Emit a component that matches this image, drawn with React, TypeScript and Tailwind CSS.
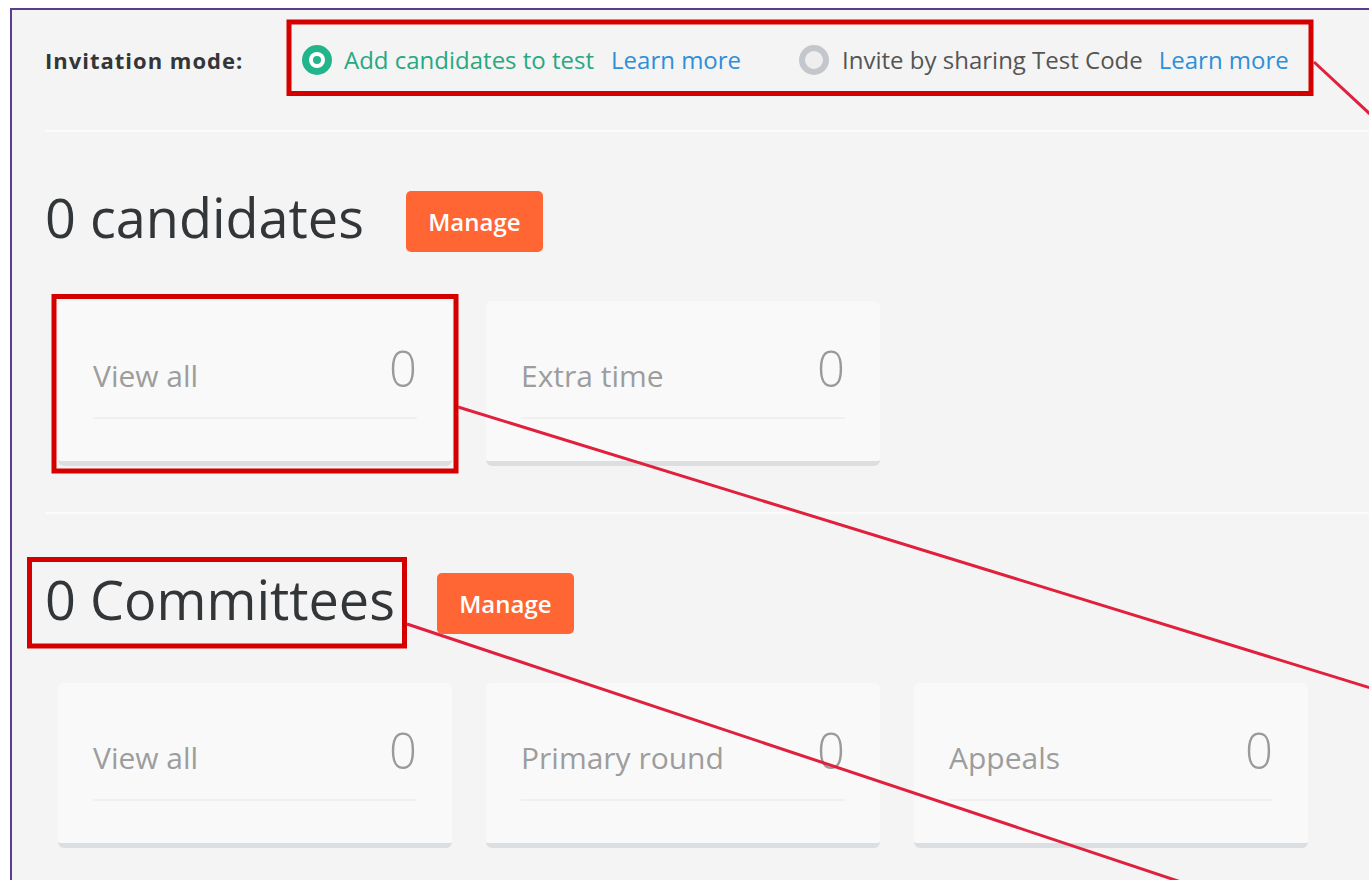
import React from 'react';

interface StatCardProps {
  label: string;
  count: number;
}

const StatCard = ({ label, count }: StatCardProps) => {
  return (
    <div className="w-[394px] h-[165px] rounded-[6px] bg-[#f9f9f9] border-b-[5px] border-[#dcdfe2] px-[35px] pt-[43px]">
      <div className="flex items-baseline justify-between">
        <span className="text-[30px] leading-none text-[#9d9d9d]">{label}</span>
        <span className="text-[49px] leading-none font-light text-[#9a9a9a]">{count}</span>
      </div>
      <div className="mt-[24px] h-[2px] bg-[#f0f0f0]" />
    </div>
  );
};

interface SectionProps {
  title: string;
  cards: Array<{ label: string; count: number }>;
}

const Section = ({ title, cards }: SectionProps) => {
  return (
    <section>
      <div className="mt-[53px] flex h-[64px] items-start gap-[42px]">
        <h2 className="text-[54px] leading-[64px] text-[#333638]">{title}</h2>
        <button className="mt-[6px] h-[61px] w-[137px] rounded-[5px] bg-[#ff6633] text-[24px] font-semibold text-white">
          Manage
        </button>
      </div>

      <div className="mt-[52px] ml-[13px] flex gap-[34px]">
        {cards.map((card) => (
          <StatCard key={card.label} label={card.label} count={card.count} />
        ))}
      </div>
    </section>
  );
};

const RadioOn = () => (
  <span className="flex h-[30px] w-[30px] items-center justify-center rounded-full bg-[#22b48b]">
    <span className="flex h-[16px] w-[16px] items-center justify-center rounded-full bg-white">
      <span className="h-[8px] w-[8px] rounded-full bg-[#22b48b]" />
    </span>
  </span>
);

const RadioOff = () => (
  <span className="h-[30px] w-[30px] rounded-full border-[6px] border-[#c3c7cb] bg-[#eeeeee]" />
);

// callout boxes and pointer lines drawn over the page
const Callouts = () => (
  <svg
    className="pointer-events-none absolute inset-0"
    width="1369"
    height="880"
    viewBox="0 0 1369 880"
  >
    <g fill="none" stroke="#d40000" strokeWidth="5">
      <rect x="289" y="22" width="1022" height="71.5" />
      <rect x="54" y="296.5" width="402" height="174.5" />
      <rect x="29.5" y="559.5" width="375" height="86.5" />
    </g>
    <g stroke="#e0203c" strokeWidth="3">
      <line x1="1314" y1="62" x2="1400" y2="142" />
      <line x1="458" y1="407" x2="1400" y2="697" />
      <line x1="407" y1="624" x2="1190" y2="885" />
    </g>
  </svg>
);

export default function App() {
  return (
    <div className="relative h-[880px] w-[1369px] overflow-hidden bg-white font-['Open_Sans',sans-serif]">
      <div className="ml-[10px] mt-[8px] h-[872px] w-[1400px] border-l-2 border-t-2 border-[#5b3d8f] bg-[#f4f4f4] pl-[33px]">
        <div className="flex h-[100px] items-center">
          <span className="w-[257px] text-[22px] font-bold tracking-[1px] text-[#333638]">Invitation mode:</span>

          <div className="flex items-center">
            <RadioOn />
            <span className="ml-[12px] text-[24px] text-[#27a882]">Add candidates to test</span>
            <a className="ml-[17px] text-[24px] text-[#2e8fd8]">Learn more</a>
          </div>

          <div className="ml-[58px] flex items-center">
            <RadioOff />
            <span className="ml-[13px] text-[24px] text-[#555555]">Invite by sharing Test Code</span>
            <a className="ml-[16px] text-[24px] text-[#2e8fd8]">Learn more</a>
          </div>
        </div>

        <div className="mt-[20px] h-[2px] bg-[#fbfbfb]" />

        <Section
          title="0 candidates"
          cards={[
            { label: 'View all', count: 0 },
            { label: 'Extra time', count: 0 },
          ]}
        />

        <div className="mt-[46px] h-[2px] bg-[#fbfbfb]" />

        <Section
          title="0 Committees"
          cards={[
            { label: 'View all', count: 0 },
            { label: 'Primary round', count: 0 },
            { label: 'Appeals', count: 0 },
          ]}
        />
      </div>

      <Callouts />
    </div>
  );
}
